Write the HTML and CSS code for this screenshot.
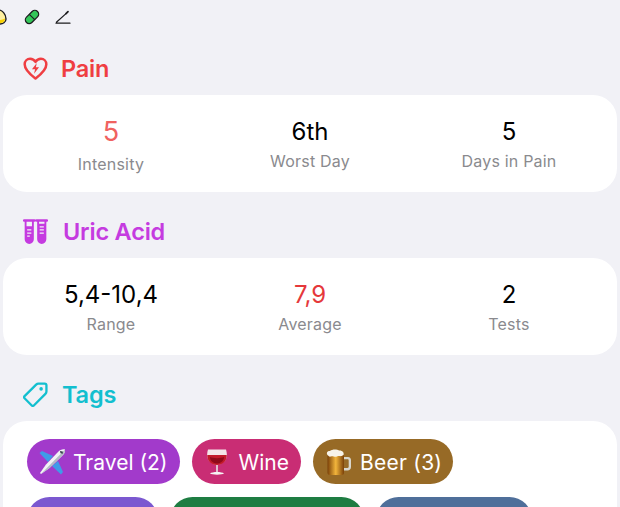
FILE: index.html
```html
<!DOCTYPE html>
<html lang="en">
<head>
	<meta charset="UTF-8">
	<title>Summary</title>
	<link rel="stylesheet" href="styles.css">
</head>
<body>
	<div class="toolbar">
		<svg class="tool tool-mood" viewBox="0 0 16 16"><path d="M8 1 C11 1 15 5 15 10 C15 13 12 15 8 15 C4 15 1 13 1 10 C1 5 5 1 8 1Z" fill="#fff0a0" stroke="#1c1c1e" stroke-width="1.4"/><path d="M2 9.500 C5 11.500 11 11.500 14 9.500 C14 13 11 14.300 8 14.300 C5 14.300 2 13 2 9.500Z" fill="#f8d000"/></svg>
		<svg class="tool" viewBox="0 0 16 16"><g transform="rotate(-45 8 8)"><rect x="0.2" y="4.2" width="15.6" height="7.6" rx="3.8" fill="#34c759" stroke="#1c1c1e" stroke-width="1.3"/><path d="M8 4.2V11.8" stroke="#1c1c1e" stroke-width="1.1"/></g></svg>
		<svg class="tool" viewBox="0 0 16 16"><path d="M1 14.2H15M1.4 13.2L11 4.6" fill="none" stroke="#1c1c1e" stroke-width="1.2" stroke-linecap="round"/><path d="M11 4.6L13 2.6" fill="none" stroke="#1c1c1e" stroke-width="1.7" stroke-linecap="round"/></svg>
	</div>

	<section class="section">
		<h2 class="head head-pain">
			<svg class="head-icon" viewBox="0 0 24 24"><path d="M12 21.6C8 18.6 1.6 14 1.6 8C1.6 4.8 4 2.6 6.8 2.6C9 2.6 10.8 3.7 12 5.6C13.2 3.7 15 2.6 17.2 2.6C20 2.6 22.4 4.8 22.4 8C22.4 14 16 18.6 12 21.6Z" fill="none" stroke="currentColor" stroke-width="2.4" stroke-linejoin="round"/><path d="M13.2 6.6L8.6 12.6H11.6L10.6 17L15.4 10.8H12.4Z" fill="currentColor"/></svg>
			Pain
		</h2>
		<div class="card stats">
			<div class="stat">
				<div class="value value-big soft-red">5</div>
				<div class="label">Intensity</div>
			</div>
			<div class="stat">
				<div class="value">6th</div>
				<div class="label">Worst Day</div>
			</div>
			<div class="stat">
				<div class="value">5</div>
				<div class="label">Days in Pain</div>
			</div>
		</div>
	</section>

	<section class="section">
		<h2 class="head head-uric">
			<svg class="head-icon" viewBox="0 0 24 24"><g fill="none" stroke="currentColor" stroke-width="1.8"><path d="M1 1.500H11M13 1.500H23" stroke-width="2.4" stroke-linecap="round"/><path d="M2.500 1.500V19.500a3.500 3.500 0 0 0 7 0V1.500M14.500 1.500V19.500a3.500 3.500 0 0 0 7 0V1.500"/></g><path d="M2.500 7H9.500V19.500a3.500 3.500 0 0 1-7 0ZM14.500 4.500H21.500V19.500a3.500 3.500 0 0 1-7 0Z" fill="currentColor"/><path d="M4 10.500H8M4 13.500H8M4 16.500H6.500M16 7.500H20M16 10.500H20M16 13.500H20" stroke="#f1f1f6" stroke-width="1.200"/></svg>
			Uric Acid
		</h2>
		<div class="card stats">
			<div class="stat">
				<div class="value">5,4-10,4</div>
				<div class="label">Range</div>
			</div>
			<div class="stat">
				<div class="value red">7,9</div>
				<div class="label">Average</div>
			</div>
			<div class="stat">
				<div class="value">2</div>
				<div class="label">Tests</div>
			</div>
		</div>
	</section>

	<section class="section">
		<h2 class="head head-tags">
			<svg class="head-icon" viewBox="0 0 24 24"><path d="M1.500 13.600L12.600 2.500C13.200 1.900 13.800 1.500 14.800 1.500H20.800C21.800 1.500 22.500 2.200 22.500 3.200V9.200C22.500 10.200 22.100 10.800 21.500 11.400L10.400 22.500C9.800 23.100 9 23.100 8.400 22.500L1.500 15.600C0.900 15 0.900 14.200 1.500 13.600Z" fill="none" stroke="currentColor" stroke-width="2.200" stroke-linejoin="round"/><circle cx="17.400" cy="6.600" r="1.700" fill="currentColor"/></svg>
			Tags
		</h2>
		<div class="card tags">
			<div class="tag tag-purple">
				<svg class="emoji" viewBox="0 0 28 28"><path d="M15 8L4 3L1.500 5L10 14ZM20 13L25 24L23 26.500L14 18Z" fill="#3f9be8"/><path d="M27 1.500C24.500 0.800 22 2 20 4L8 16.500L2 25L3 26L11.500 20L24 8C26 6 27.500 4 27 1.500Z" fill="#f2f3f5"/><path d="M27 1.500C27.500 4 26 6 24 8L11.500 20L3 26Z" fill="#b4bbc5"/><path d="M22 3L24.800 3.500L24.800 5.800L22.400 5.300Z" fill="#39414d"/></svg>
				<span>Travel (2)</span>
			</div>
			<div class="tag tag-pink">
				<svg class="emoji" viewBox="0 0 28 28"><path d="M5 1.500H23C25 8 24 15.500 14 17C4 15.500 3 8 5 1.500Z" fill="#f3e6e8"/><path d="M4.300 7H23.700C24 12 21 16.500 14 17C7 16.500 4 12 4.300 7Z" fill="#c21a2a"/><path d="M7 9C10 10.500 18 10.500 21 9C21 12 19 15 14 15.500C9 15 7 12 7 9Z" fill="#8f0a1a"/><path d="M13.200 17H14.800V24H13.200Z" fill="#e8e4e4"/><path d="M7 25.500C9 23.500 19 23.500 21 25.500C19 27 9 27 7 25.500Z" fill="#f5f3f3"/></svg>
				<span>Wine</span>
			</div>
			<div class="tag tag-brown">
				<svg class="emoji" viewBox="0 0 28 28"><defs><linearGradient id="beerFill" x1="0" x2="1" y1="0" y2="0"><stop offset="0" stop-color="#7a4008"/><stop offset="0.5" stop-color="#f2b53c"/><stop offset="1" stop-color="#7a4008"/></linearGradient></defs><path d="M19 9H24C26 9 27 10.500 27 12V19C27 21 25.500 22.500 23.500 22.500H19V20H23.500C24.300 20 24.700 19.500 24.700 18.800V12.500C24.700 11.800 24.300 11.300 23.500 11.300H19Z" fill="#d8d6cc"/><rect x="3.500" y="6" width="16.500" height="21" rx="2.500" fill="url(#beerFill)"/><path d="M3.500 7C2 5 3.500 2.500 6 3C8 1 13 1 15 2.500C18 2 20.500 4.500 19.500 7C17 9 15 7.500 13 8.500C10 9.500 9 7.500 7 8.500C5 9 4.500 8 3.500 7Z" fill="#f7f3e8"/></svg>
				<span>Beer (3)</span>
			</div>
			<div class="tag tag-violet"></div>
			<div class="tag tag-green"></div>
			<div class="tag tag-slate"></div>
		</div>
	</section>
</body>
</html>
```

FILE: styles.css
```css
*{box-sizing:border-box;}
html,body{margin:0;padding:0;height:507px;overflow:hidden;}
body{
	background-color:#f1f1f6;
	font-family:Inter,"Liberation Sans",sans-serif;
	color:#000;
}

.toolbar{
	display:flex;
	align-items:center;
	gap:15px;
	height:18px;
	margin:8px 0 25px -9px;
}
.tool{width:16px;height:16px;}
.tool-mood{margin-right:2px;}

.section{margin:0 3px 22px;}
.head{
	display:flex;
	align-items:center;
	gap:15px;
	height:34px;
	margin:0 0 10px 20px;
	font-size:23.5px;
	font-weight:600;
	letter-spacing:-0.2px;
}
.head-icon{width:25px;height:25px;flex:none;}
.head-pain{color:#ef3e42;gap:13px;}
.head-uric{color:#c53be0;}
.head-tags{color:#13bfcf;gap:14px;}

.card{
	background-color:#fff;
	border-radius:24px;
}
.stats{
	display:grid;
	grid-template-columns:repeat(3,1fr);
	height:97px;
	padding:22px 8.5px 0;
}
.stat{text-align:center;}
.value{
	height:29px;
	line-height:29px;
	font-size:24px;
	font-weight:400;
}
.value-big{
	height:32px;
	line-height:29px;
	font-size:27px;
}
.soft-red{color:#f0625f;}
.red{color:#e5383b;}
.label{
	margin-top:5px;
	font-size:16px;
	line-height:20px;
	color:#8a8a8e;
	letter-spacing:0.2px;
}

.tags{
	display:flex;
	flex-wrap:wrap;
	gap:12px;
	width:614px;
	height:140px;
	padding:18px 24px;
}
.tag{
	display:flex;
	align-items:center;
	gap:7px;
	height:45px;
	padding:1px 12px 0 11px;
	border-radius:23px;
	color:#fff;
	font-size:21px;
	white-space:nowrap;
}
.emoji{width:28px;height:28px;flex:none;}
.tag-purple{background-color:#a23acb;}
.tag-pink{background-color:#c92d74;gap:8px;}
.tag-brown{background-color:#976a26;gap:8px;padding-right:11px;letter-spacing:0.25px;}
.tag-violet{background-color:#7b58d0;width:131px;}
.tag-green{background-color:#1e7d42;width:194px;}
.tag-slate{background-color:#4f6f9a;width:156px;}
```
